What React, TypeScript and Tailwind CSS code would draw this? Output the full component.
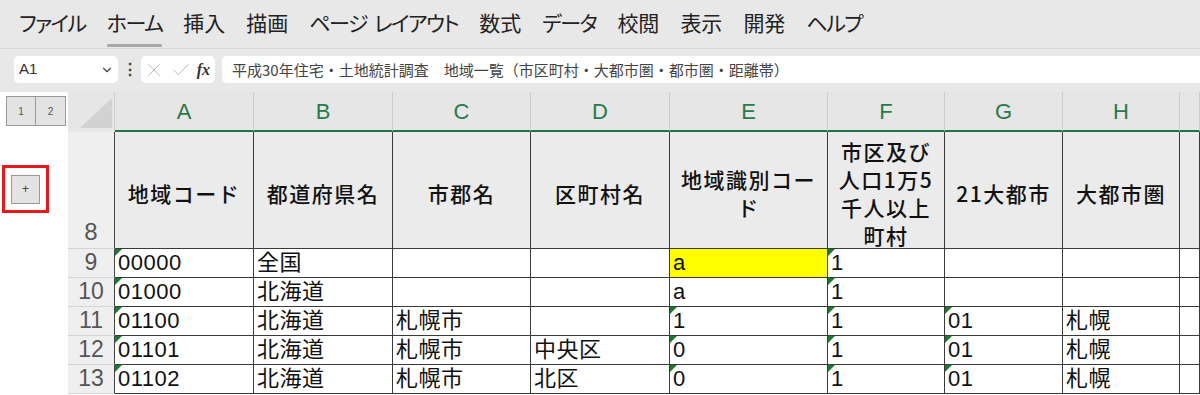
import { X, Check, ChevronDown } from "lucide-react";

const menus = ["ファイル", "ホーム", "挿入", "描画", "ページ レイアウト", "数式", "データ", "校閲", "表示", "開発", "ヘルプ"];
const kana = ["ファイル", "ホーム", "ページ レイアウト", "データ", "ヘルプ"];

const cols = ["A", "B", "C", "D", "E", "F", "G", "H", ""];

type Cell = { v: string; tri?: boolean; yellow?: boolean };

const rows: { n: number; cells: Cell[] }[] = [
  {
    n: 9,
    cells: [{ v: "00000", tri: true }, { v: "全国" }, { v: "" }, { v: "" }, { v: "a", yellow: true }, { v: "1", tri: true }, { v: "" }, { v: "" }, { v: "" }],
  },
  {
    n: 10,
    cells: [{ v: "01000", tri: true }, { v: "北海道" }, { v: "" }, { v: "" }, { v: "a" }, { v: "1", tri: true }, { v: "" }, { v: "" }, { v: "" }],
  },
  {
    n: 11,
    cells: [{ v: "01100", tri: true }, { v: "北海道" }, { v: "札幌市" }, { v: "" }, { v: "1", tri: true }, { v: "1", tri: true }, { v: "01", tri: true }, { v: "札幌" }, { v: "" }],
  },
  {
    n: 12,
    cells: [{ v: "01101", tri: true }, { v: "北海道" }, { v: "札幌市" }, { v: "中央区" }, { v: "0", tri: true }, { v: "1", tri: true }, { v: "01", tri: true }, { v: "札幌" }, { v: "" }],
  },
  {
    n: 13,
    cells: [{ v: "01102", tri: true }, { v: "北海道" }, { v: "札幌市" }, { v: "北区" }, { v: "0", tri: true }, { v: "1", tri: true }, { v: "01", tri: true }, { v: "札幌" }, { v: "" }],
  },
];

const headers: string[][] = [
  ["地域コード"],
  ["都道府県名"],
  ["市郡名"],
  ["区町村名"],
  ["地域識別コー", "ド"],
  ["市区及び", "人口1万5", "千人以上", "町村"],
  ["21大都市"],
  ["大都市圏"],
  [],
];

const Triangle = () => (
  <span className="absolute left-0 top-0 h-0 w-0 border-t-[7px] border-r-[7px] border-t-[#1b7a2f] border-r-transparent" />
);

export default function App() {
  return (
    <div className="w-[1200px] h-[395px] overflow-hidden bg-white font-['Liberation_Sans','Noto_Sans_CJK_JP',sans-serif] text-[#111]">
      {/* ribbon tabs */}
      <div className="h-[49px] bg-[#e8e8e8] flex items-center gap-[21px] pl-[19px] border-b border-[#d9d9d9] font-['Noto_Sans_CJK_JP',sans-serif] text-[21px] text-[#222] [font-feature-settings:'palt']">
        {menus.map((m) => (
          <div key={m} className={`relative flex gap-[7px] leading-none pb-[4px] ${kana.includes(m) ? "tracking-[-1.5px]" : ""}`}>
            {m.split(" ").map((part) => (
              <span key={part}>{part}</span>
            ))}
            {m === "ホーム" && (
              <span className="absolute left-0 right-0 -bottom-[10px] h-[3px] rounded-full bg-[#a8a8a8]" />
            )}
          </div>
        ))}
      </div>

      {/* formula bar */}
      <div className="h-[43px] bg-[#e8e8e8] flex items-center pl-[14px] pb-[2px]">
        <div className="w-[104px] h-[27px] bg-white rounded-[5px] flex items-center justify-between pl-[5px] pr-[4px] text-[15px] text-[#333]">
          <span>A1</span>
          <ChevronDown size={14} strokeWidth={2} className="text-[#444]" />
        </div>
        <div className="w-[23px] flex justify-center text-[#444] text-[16px] font-bold">⋮</div>
        <div className="w-[74px] h-[27px] bg-white rounded-[5px] flex items-center justify-between px-[2px]">
          <X size={22} strokeWidth={1} className="text-[#b0b0b0]" />
          <Check size={22} strokeWidth={1} className="text-[#b0b0b0]" />
          <span className="font-['Liberation_Serif',serif] italic font-bold text-[16px] text-[#333] pr-[3px]">fx</span>
        </div>
        <div className="ml-[7px] flex-1 h-[27px] bg-white rounded-l-[5px] flex items-center pl-[10px] font-['Noto_Sans_CJK_JP',sans-serif] text-[15px] text-[#444] leading-none">
          平成30年住宅・土地統計調査　地域一覧（市区町村・大都市圏・都市圏・距離帯）
        </div>
      </div>

      {/* sheet */}
      <div className="flex">
        {/* outline area */}
        <div className="w-[68px] flex flex-col bg-white">
          <div className="flex pl-[6px] pt-[4px]">
            <div className="w-[30px] h-[30px] bg-[#e3e3e3] border border-[#9a9a9a] flex items-center justify-center text-[10px] text-[#555]">1</div>
            <div className="w-[30px] h-[30px] bg-[#e3e3e3] border border-l-0 border-[#9a9a9a] flex items-center justify-center text-[10px] text-[#555]">2</div>
          </div>
          <div className="ml-[2px] mt-[39px] w-[47px] h-[48px] border-[3px] border-[#e8191a] flex items-center justify-center">
            <div className="w-[29px] h-[29px] bg-[#e3e3e3] border border-[#9a9a9a] flex items-center justify-center text-[12px] text-[#444]">+</div>
          </div>
        </div>

        {/* grid */}
        <div className="grid grid-cols-[47px_139px_139px_138px_139px_158px_117px_118px_117px_20px] grid-rows-[40px_117px_29px_29px_29px_29px_29px]">
          {/* corner */}
          <div className="bg-[#e6e6e6] border-r border-b-2 border-r-[#cfcfcf] border-b-[#e6e6e6] flex items-end justify-end">
            <svg width="38" height="34" viewBox="0 0 38 34">
              <polygon points="36,2 36,32 4,32" fill="#d2d2d2" />
            </svg>
          </div>
          {cols.map((c, i) => (
            <div
              key={"h" + i}
              className="bg-[#e6e6e6] border-r border-r-[#cccccc] border-b-2 border-b-[#217346] flex items-center justify-center text-[22px] text-[#2a7a48]"
            >
              {c}
            </div>
          ))}

          {/* row 8 */}
          <div className="bg-[#efefef] border-r border-r-[#444] border-b border-b-[#d4d4d4] flex items-end justify-center text-[24px] text-[#555] leading-none pb-[4px]">
            8
          </div>
          {headers.map((h, i) => (
            <div
              key={"t" + i}
              className="bg-[#ebebeb] border-r border-b border-[#3a3a3a] flex flex-col items-center justify-center font-['Noto_Sans_CJK_JP',sans-serif] font-medium text-[21px] leading-[28px] text-[#111] tracking-[1.5px] pt-[6px]"
            >
              {h.map((l) => (
                <span key={l}>{l}</span>
              ))}
            </div>
          ))}

          {/* data rows */}
          {rows.map((r) => (
            <>
              <div
                key={"n" + r.n}
                className="bg-[#efefef] border-r border-r-[#444] border-b border-b-[#d4d4d4] flex items-end justify-center text-[23px] text-[#555] leading-none pb-[3px]"
              >
                {r.n}
              </div>
              {r.cells.map((c, i) => (
                <div
                  key={r.n + "-" + i}
                  className={`relative border-r border-b border-[#3a3a3a] flex items-end pl-[3px] pb-[2px] text-[22px] leading-[24px] tracking-[0.5px] whitespace-nowrap ${
                    c.yellow ? "bg-[#ffff00]" : "bg-white"
                  }`}
                >
                  {c.tri && <Triangle />}
                  {c.v}
                </div>
              ))}
            </>
          ))}
        </div>
      </div>
    </div>
  );
}
